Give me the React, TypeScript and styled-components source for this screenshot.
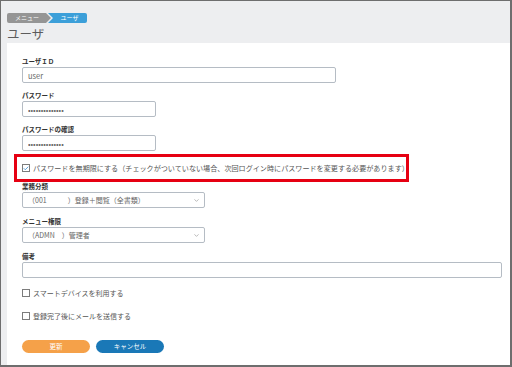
import styled, { createGlobalStyle } from "styled-components";
import { ChevronDown, Check } from "lucide-react";

const GlobalStyle = createGlobalStyle`
  html, body { margin: 0; padding: 0; background: #fff; }
  body { font-family: "Noto Sans CJK JP", "Noto Sans", sans-serif; }
  * { box-sizing: border-box; }
`;

const Frame = styled.div`
  width: 512px;
  height: 367px;
  border: 1px solid #6e6e6e;
  border-right-width: 2px;
  border-bottom-width: 2px;
  background: #edeef0;
  display: flex;
  flex-direction: column;
`;

const Header = styled.header`
  padding: 12px 0 2px 6px;
`;

const Breadcrumb = styled.nav`
  display: flex;
  height: 10px;
`;

const Crumb = styled.span<{ $active?: boolean }>`
  display: block;
  height: 10px;
  line-height: 10px;
  font-size: 6px;
  color: #fff;
  text-align: center;
  background: ${(p) => (p.$active ? "#3c9fd9" : "#959595")};
  width: ${(p) => (p.$active ? "39px" : "44px")};
  margin-left: ${(p) => (p.$active ? "-3px" : "0")};
  padding: ${(p) => (p.$active ? "0 0 0 4px" : "0 4px 0 0")};
  border-radius: ${(p) => (p.$active ? "0 2px 2px 0" : "2px 0 0 2px")};
  clip-path: ${(p) =>
    p.$active
      ? "polygon(0 0, 100% 0, 100% 100%, 0 100%, 5px 50%)"
      : "polygon(0 0, calc(100% - 5px) 0, 100% 50%, calc(100% - 5px) 100%, 0 100%)"};
`;

const Title = styled.h1`
  margin: 4px 0 0;
  font-size: 12.5px;
  line-height: 14px;
  font-weight: 400;
  color: #5c5c5c;
`;

const Panel = styled.main`
  flex: 1;
  background: #fff;
  margin-left: 6px;
  padding: 14px 0 0 15px;
`;

const Field = styled.div<{ $mb: number }>`
  margin-bottom: ${(p) => p.$mb}px;
`;

const Label = styled.label`
  display: block;
  font-size: 6.5px;
  line-height: 8px;
  font-weight: 700;
  color: #333;
  margin-bottom: 2px;
`;

const TextInput = styled.input<{ $w: number }>`
  display: block;
  width: ${(p) => p.$w}px;
  height: 16px;
  border: 1px solid #b5bcc4;
  border-radius: 2px;
  padding: 0 5px;
  font-family: inherit;
  font-size: 7.5px;
  color: #666;
  background: #fff;
  outline: none;
`;

const SelectBox = styled.div`
  display: flex;
  align-items: center;
  justify-content: space-between;
  width: 183px;
  height: 16px;
  border: 1px solid #b5bcc4;
  border-radius: 2px;
  padding: 0 4px 0 5px;
  font-size: 7px;
  color: #666;
  white-space: pre;
  svg { color: #888; }
`;

const Highlight = styled.div`
  display: flex;
  align-items: center;
  gap: 3px;
  width: 395px;
  height: 28px;
  margin-left: -8px;
  padding-left: 5px;
  border: 3px solid #e60012;
  font-size: 7.1px;
  color: #555;
  white-space: nowrap;
`;

const Box = styled.span`
  display: flex;
  align-items: center;
  justify-content: center;
  width: 8px;
  height: 8px;
  border: 1px solid #7c7c7c;
  background: #fff;
  flex: none;
  svg { color: #2d86cc; }
`;

const CheckRow = styled.div<{ $mt: number }>`
  display: flex;
  align-items: center;
  gap: 3px;
  height: 10px;
  margin-top: ${(p) => p.$mt}px;
  font-size: 7px;
  color: #555;
`;

const Actions = styled.div`
  display: flex;
  gap: 6px;
  margin-top: 19px;
`;

const Button = styled.button<{ $tone: "orange" | "blue" }>`
  width: 68px;
  height: 13px;
  border: none;
  border-radius: 7px;
  padding: 0;
  font-family: inherit;
  font-size: 6.5px;
  line-height: 13px;
  color: #fff;
  background: ${(p) => (p.$tone === "orange" ? "#f5a149" : "#1a78b7")};
`;

export default function App() {
  return (
    <>
      <GlobalStyle />
      <Frame>
        <Header>
          <Breadcrumb>
            <Crumb>メニュー</Crumb>
            <Crumb $active>ユーザ</Crumb>
          </Breadcrumb>
          <Title>ユーザ</Title>
        </Header>
        <Panel>
          <Field $mb={8}>
            <Label>ユーザＩＤ</Label>
            <TextInput $w={314} defaultValue="user" />
          </Field>
          <Field $mb={8}>
            <Label>パスワード</Label>
            <TextInput $w={134} type="password" defaultValue="aaaaaaaaaaaaaa" />
          </Field>
          <Field $mb={3}>
            <Label>パスワードの確認</Label>
            <TextInput $w={134} type="password" defaultValue="aaaaaaaaaaaaaa" />
          </Field>
          <Highlight>
            <Box>
              <Check size={7} strokeWidth={3} />
            </Box>
            パスワードを無期限にする（チェックがついていない場合、次回ログイン時にパスワードを変更する必要があります）
          </Highlight>
          <Field $mb={9}>
            <Label>業務分類</Label>
            <SelectBox>
              <span>（001　　　）登録＋閲覧（全書類）</span>
              <ChevronDown size={7} strokeWidth={2} />
            </SelectBox>
          </Field>
          <Field $mb={9}>
            <Label>メニュー権限</Label>
            <SelectBox>
              <span>（ADMN　）管理者</span>
              <ChevronDown size={7} strokeWidth={2} />
            </SelectBox>
          </Field>
          <Field $mb={0}>
            <Label>備考</Label>
            <TextInput $w={480} />
          </Field>
          <CheckRow $mt={10}>
            <Box />
            スマートデバイスを利用する
          </CheckRow>
          <CheckRow $mt={13}>
            <Box />
            登録完了後にメールを送信する
          </CheckRow>
          <Actions>
            <Button $tone="orange">更新</Button>
            <Button $tone="blue">キャンセル</Button>
          </Actions>
        </Panel>
      </Frame>
    </>
  );
}
